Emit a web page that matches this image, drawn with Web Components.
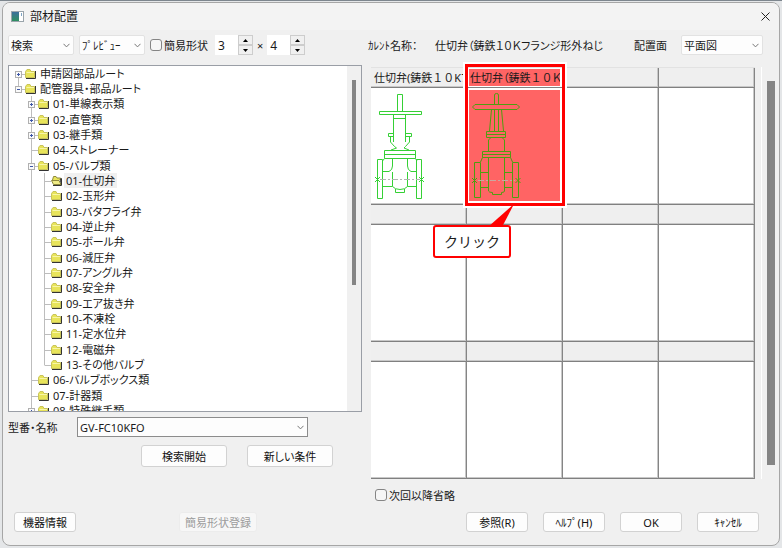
<!DOCTYPE html>
<html lang="ja">
<head>
<meta charset="utf-8">
<title>部材配置</title>
<style>
  html, body { height: 100%; margin: 0; }
  body {
    box-sizing: border-box;
    padding: 1px 2px 2px;
    background: #e4e6e8;
    border-top: 1px solid #7d868e;
    font: 11px/15px "Noto Sans", "Noto Sans CJK JP", sans-serif;
    font-feature-settings: "palt";
    color: #1a1a1a;
    overflow: hidden;
  }
</style>
</head>
<body>
<app-window caption="部材配置">
  <div slot="left-tools" class="tools">
    <drop-down label="表示モード" value="検索"></drop-down>
    <drop-down label="表示形式" value="ﾌﾟﾚﾋﾞｭｰ"></drop-down>
    <check-field label="簡易形状"></check-field>
  </div>
  <num-spinner slot="left-spin" label="行数" value="3"></num-spinner>
  <num-spinner slot="left-spin2" label="列数" value="4"></num-spinner>
  <part-tree slot="tree"></part-tree>
  <drop-down slot="model" label="型番・名称" value="GV-FC10KFO" boxed></drop-down>
  <push-button slot="search">検索開始</push-button>
  <push-button slot="search">新しい条件</push-button>
  <drop-down slot="plane" label="配置面" value="平面図"></drop-down>
  <part-gallery slot="gallery"></part-gallery>
  <check-field slot="skip" label="次回以降省略"></check-field>
  <push-button slot="info">機器情報</push-button>
  <push-button slot="register" disabled>簡易形状登録</push-button>
  <push-button slot="actions">参照(R)</push-button>
  <push-button slot="actions">ﾍﾙﾌﾟ(H)</push-button>
  <push-button slot="actions">OK</push-button>
  <push-button slot="actions">ｷｬﾝｾﾙ</push-button>
</app-window>

<script>
const make = (host, html) => {
  const t = document.createElement('template');
  t.innerHTML = html;
  host.attachShadow({ mode: 'open' }).append(t.content.cloneNode(true));
};

customElements.define('push-button', class extends HTMLElement {
  constructor() {
    super();
    make(this, `<style>
      :host { display: block; }
      button { display: block; box-sizing: border-box; width: 100%; height: 100%; padding: 0; margin: 0;
        font: inherit; font-feature-settings: inherit; color: #111; background: #fdfdfd;
        border: 1px solid #d2d2d2; border-radius: 3px; white-space: nowrap; }
      button:disabled { color: #9c9c9c; background: #f7f7f7; border-color: #ececec; }
    </style><button type="button"><slot></slot></button>`);
  }
  connectedCallback() {
    this.shadowRoot.querySelector('button').disabled = this.hasAttribute('disabled');
  }
});

customElements.define('drop-down', class extends HTMLElement {
  constructor() {
    super();
    const v = this.getAttribute('value'), l = this.getAttribute('label');
    make(this, `<style>
      :host { display: grid; height: 20px; align-items: stretch; }
      select { grid-area: 1 / 1; box-sizing: border-box; width: 100%; appearance: none; margin: 0;
        font: inherit; font-feature-settings: inherit; color: inherit; background: #fdfdfd;
        border: 1px solid #e2e2e2; border-radius: 2px; padding: 0 16px 0 2px; }
      :host([boxed]) select { border-color: #8c8c8c; border-radius: 0; }
      svg { grid-area: 1 / 1; justify-self: end; align-self: center; margin-right: 4px; pointer-events: none; }
    </style>
    <select aria-label="${l}"><option>${v}</option></select>
    <svg width="7" height="5" viewBox="0 0 7 5"><path d="M.5 .8 3.5 3.9 6.5 .8" fill="none" stroke="#777"/></svg>`);
  }
});

customElements.define('check-field', class extends HTMLElement {
  constructor() {
    super();
    make(this, `<style>
      :host { display: block; }
      label { display: flex; align-items: center; gap: 2px; white-space: nowrap; }
      input { appearance: none; box-sizing: border-box; width: 12px; height: 12px; margin: 0;
        border: 1px solid #858585; border-radius: 3px; background: #f6f6f6; }
    </style><label><input type="checkbox">${this.getAttribute('label')}</label>`);
  }
});

customElements.define('num-spinner', class extends HTMLElement {
  constructor() {
    super();
    make(this, `<style>
      :host { display: flex; height: 20px; }
      input { box-sizing: border-box; width: 23px; border: 0; margin: 0; padding: 0 0 0 3px; background: #fff;
        font: inherit; font-size: 12px; color: inherit; appearance: textfield; -moz-appearance: textfield; }
      input::-webkit-inner-spin-button { appearance: none; display: none; }
      .keys { display: grid; grid-template-rows: 1fr 1fr; width: 15px; }
      button { display: grid; place-items: center; padding: 0; margin: 0; background: #f0f0f0;
        border: 1px solid #cdcdcd; box-sizing: border-box; min-height: 0; }
      svg { display: block; }
    </style>
    <input type="number" aria-label="${this.getAttribute('label')}" value="${this.getAttribute('value')}">
    <div class="keys">
      <button type="button" aria-label="増やす"><svg width="5" height="3"><path d="M0 3 2.500 0 5 3z"/></svg></button>
      <button type="button" aria-label="減らす"><svg width="5" height="3"><path d="M0 0 2.500 3 5 0z"/></svg></button>
    </div>`);
  }
});

/* depth, expander ('+', '-', or ''), label */
const NODES = [
  [0, '+', '申請図部品ルート'], [0, '-', '配管器具・部品ルート'],
  [1, '+', '01-単線表示類'], [1, '+', '02-直管類'], [1, '+', '03-継手類'],
  [1, '', '04-ストレーナー'], [1, '-', '05-バルブ類'],
  [2, '', '01-仕切弁'], [2, '', '02-玉形弁'], [2, '', '03-バタフライ弁'], [2, '', '04-逆止弁'],
  [2, '', '05-ボール弁'], [2, '', '06-減圧弁'], [2, '', '07-アングル弁'], [2, '', '08-安全弁'],
  [2, '', '09-エア抜き弁'], [2, '', '10-不凍栓'], [2, '', '11-定水位弁'], [2, '', '12-電磁弁'],
  [2, '', '13-その他バルブ'],
  [1, '', '06-バルブボックス類'], [1, '', '07-計器類'], [1, '+', '08-特殊継手類']
];
const SELECTED = 7;

customElements.define('part-tree', class extends HTMLElement {
  constructor() {
    super();
    const line = d => `<path d="${d}" fill="none" stroke="#bdbdbd"/>`;
    const cell = s => `<svg width="13" height="16" viewBox="0 0 13 16">${s}</svg>`;
    const folder = '<path d="M.5 5.500 2 3.500H5L6 5.500H9.500V11.500H.5z" fill="#e8e45a" stroke="#c9c45a"/><path d="M1 12.500H10.500V5" fill="none" stroke="#333"/><path d="M1.500 6.500H9" stroke="#f8f6a8"/>';
    const open = '<path d="M1.500 7 2.500 3.500H5L6 5H9.500V7" fill="#e8e45a" stroke="#8d883c"/><path d="M.5 7.500H8L10 11.500H2.500z" fill="#efeb86" stroke="#8d883c"/><path d="M2 12.500H10.500V5.500L9 6.500 10.500 11" fill="none" stroke="#333"/>';
    const rows = NODES.map(([d, e, text], i) => {
      let s = '';
      for (let k = 0; k < d; k++) s += cell(k === 1 ? line('M6.500 0V16') : '');
      const first = i === 0, last = i === 1 || i === 19;
      s += cell(line(`M6.500 ${first ? 8 : 0}V${last ? 8 : 16}M6.500 8.500H13`) +
        (e ? `<rect x="3.500" y="5.500" width="6" height="6" fill="#fafafa" stroke="#b0b0b0"/>
              <path d="M5 8.500H8${e === '+' ? 'M6.500 7V10' : ''}" stroke="#3c56a8"/>` : ''));
      s += cell(i === SELECTED ? open : folder);
      return `<li role="treeitem" aria-level="${d + 1}"${i === SELECTED ? ' aria-selected="true"' : ''}>${s}<span>${text}</span></li>`;
    }).join('');
    make(this, `<style>
      :host { display: flex; overflow: hidden; min-height: 0; background: #fff; border: 1px solid #9a9ea6; }
      ul { flex: 1; min-width: 0; list-style: none; margin: 0; padding: 0 0 0 3px; }
      li { display: flex; height: 15px; white-space: nowrap; overflow: visible; }
      li:nth-child(3n) { height: 16px; }
      li svg { flex: none; display: block; }
      span { padding: 0 2px; line-height: 16px; }
      [aria-selected] span { background: #f0f0f0; }
      .bar { width: 14px; background: #f0f0f0; padding-top: 14px; box-sizing: border-box; }
      .thumb { width: 4px; height: 62%; margin: 0 auto; background: #858585; }
    </style><ul role="tree">${rows}</ul><div class="bar"><div class="thumb"></div></div>`);
  }
});

const VALVE_A = `<svg viewBox="371 89 92 114" width="92" height="114" fill="none" stroke="#35d035">
  <path d="M397.500 112V95.500H402.500V112M379.500 112.500H421.500V115.500H379.500zM393.500 115.500V143M405.500 115.500V143M393.500 119.500H405.500
    M388.500 134.500H393.500M388.500 134.500V137.500H393.500M405.500 134.500H411.500V137.500H405.500M390.500 137.500V143L394.500 147.500 396.500 149 391 151M409.500 137.500V143L405.500 147.500 404 149 409 151
    M384.500 151.500H415.500V159.500H384.500zM384.500 155.500H415.500M384.500 159.500 382.500 162M415.500 159.500 417 162
    M377.500 160.500H382.500V199.500H377.500zM416.500 160.500H421.500V199.500H416.500z
    M382.500 172.500H389Q392.500 171 392.500 167V159.500M416.500 172.500H411Q407.500 171 407.500 167V159.500
    M382.500 187.500H392.500V173M416.500 187.500H407.500V173M392.500 187.500Q395 190.500 400 190.500T407.500 187.500M395.500 190V193.500H404.500V190"/>
  <path d="M375 178 380 183M380 178 375 183M419 178 424 183M424 178 419 183"/>
  <path d="M380 180.500H420" stroke="#b0b6b0" stroke-dasharray="6 2 2 2"/></svg>`;
const VALVE_B = `<svg viewBox="469 91 92 110" width="92" height="110" fill="none" stroke="#4f9e10">
  <path d="M494.500 106V96Q494.500 94.500 496.500 94.500T498.500 96V106M475 105.500H517L519.500 108 517 110.500H475L472.500 108z
    M491.500 110.500 489.500 132M501.500 110.500 503.500 132M494.500 110.500V132M498.500 110.500V132
    M486.500 132.500H505.500V138.500H486.500zM486.500 135.500H505.500M491 138.500 488.500 141V152M502 138.500 504.500 141V152
    M482.500 152.500H510.500V158.500H482.500zM482.500 155.500H510.500M482.500 158.500 480.500 163M510.500 158.500 512.500 163
    M474.500 163.500H480.500V198.500H474.500zM512.500 163.500H518.500V198.500H512.500z
    M488.500 158.500V192Q489 193.500 492.500 193.500V195.500H501.500V193.500Q504.500 193.500 504.500 192V158.500
    M480.500 173.500H488.500M480.500 188.500H488.500M504.500 173.500H512.500M504.500 188.500H512.500"/>
  <path d="M472 179 477 184M477 179 472 184M515.500 179 520.500 184M520.500 179 515.500 184"/>
  <path d="M478 181.500H515" stroke="#c9a8a0" stroke-dasharray="6 2 2 2"/></svg>`;

customElements.define('part-gallery', class extends HTMLElement {
  constructor() {
    super();
    const parts = [['仕切弁(鋳鉄<b>１０</b>Kフ', VALVE_A], ['仕切弁（鋳鉄<b>１０</b>Ｋ', VALVE_B]];
    let cells = '';
    for (let i = 0; i < 12; i++) {
      const [name, pic] = parts[i] || ['', ''];
      cells += `<div class="cell${i === 1 ? ' on' : ''}"><div class="head"><div class="in">${name}</div></div>
        <div class="body"><div class="in">${pic}</div></div>${i === 1 ? `<div class="mark"></div>
        <div class="note">クリック</div>
        <svg class="tail" width="28" height="25" viewBox="0 0 28 25"><path d="M1 24 27 1 15 24z" fill="#f00"/></svg>` : ''}</div>`;
    }
    make(this, `<style>
      :host { display: flex; min-height: 0; }
      .grid { flex: 1; min-width: 0; display: grid; grid-template-columns: repeat(4, minmax(0, 1fr)); grid-template-rows: repeat(3, minmax(0, 1fr));
        border-top: 1px solid #e2e2e2; box-sizing: border-box; }
      .cell { position: relative; display: grid; grid-template-rows: 20px minmax(0, 1fr); grid-template-columns: minmax(0, 1fr);
        border-right: 1px solid #858585; box-shadow: inset -1px 0 #c8c8c8; }
      .head, .body { border-bottom: 1px solid #808080; box-shadow: inset 0 -1px #c8c8c8, inset -1px 0 #c8c8c8; min-height: 0; }
      .head { background: #efefef; }
      .body { background: #fff; }
      .in { overflow: hidden; white-space: nowrap; }
      .head .in { margin: 1px 3px 0 0; padding-left: 3px; line-height: 17px; height: 17px; }
      b { font-weight: inherit; font-feature-settings: normal; }
      .body svg { display: block; }
      .on { z-index: 2; }
      .on .head, .on .body { background: #fff; box-shadow: none; }
      .on .in { background: #ff6464; }
      .on .head .in { margin: 1px 2px 0; padding-left: 1px; }
      .on .body { display: grid; }
      .on .body .in { margin: 2px 2px 3px; }
      .mark { position: absolute; inset: -4px -3px -1px -2px; border: 3px solid #f00; outline: 2px solid #fff; }
      .note { position: absolute; left: -34px; top: 157px; box-sizing: border-box; width: 78px; height: 33px;
        border: 2px solid #f00; border-radius: 3px; background: #fff; text-align: center;
        font: 14px/28px "Noto Sans CJK JP", sans-serif; font-feature-settings: normal; white-space: nowrap; }
      .tail { position: absolute; left: 20px; top: 135px; }
      .bar { width: 15px; margin-left: 6px; border-left: 1px solid #fff; box-sizing: border-box; padding: 14px 0 14px 5px; }
      .thumb { height: 100%; background: #858585; width: 8px; }
    </style><div class="grid">${cells}</div><div class="bar"><div class="thumb"></div></div>`);
  }
});

customElements.define('app-window', class extends HTMLElement {
  constructor() {
    super();
    make(this, `<style>
      :host { display: flex; flex-direction: column; box-sizing: border-box; height: 100%; background: #f0f0f0;
        border: 1px solid #a6a6a6; border-radius: 8px; overflow: hidden; }
      header { display: flex; align-items: center; height: 27px; flex: none; background: #f3f3f3; padding: 0 9px 0 8px; gap: 6px; font-size: 12px; }
      header .name { flex: 1; }
      header button { border: 0; background: none; padding: 0; margin: 0; display: block; }
      svg { display: block; }
      main { flex: 1; min-height: 0; display: grid; grid-template-columns: minmax(0, 354fr) minmax(0, 408fr); column-gap: 6px; padding: 0 3px 0 5px; }
      .left, .right { display: flex; flex-direction: column; min-height: 0; min-width: 0; }
      .row { display: flex; align-items: center; flex: none; white-space: nowrap; }
      .tools { height: 35px; box-sizing: border-box; padding-bottom: 5px; }
      ::slotted(.tools) { display: grid; grid-template-columns: 66px 66px auto; align-items: center; column-gap: 5px; }
      .spins { margin-left: 7px; gap: 4px; }
      ::slotted(part-tree) { flex: 1; }
      .model { height: 30px; }
      .model label { flex: 0 0 69px; }
      .model ::slotted(drop-down) { flex: 0 1 231px; }
      .search { height: 22px; margin: 3px 0 0 133px; gap: 20px; }
      .search ::slotted(push-button) { width: 86px; height: 22px; }
      .left { padding-bottom: 39px; }
      .right .tools { padding: 0 13px 5px 0; }
      .cur { flex: 0 0 67px; }
      .plane { margin-left: auto; gap: 14px; }
      .plane ::slotted(drop-down) { width: 82px; }
      ::slotted(part-gallery) { flex: 1; margin: 2px 0 0 3px; }
      .skip { height: 22px; padding: 5px 0 0 7px; }
      footer { flex: none; display: flex; align-items: center; padding: 6px 20px 13px 11px; }
      footer ::slotted(push-button) { height: 20px; width: 62px; }
      footer .reg { margin-left: 103px; }
      .reg ::slotted(push-button) { width: 78px; }
      .acts { display: flex; gap: 15px; margin-left: auto; }
    </style>
    <header>
      <svg width="13" height="11" viewBox="0 0 13 11"><defs><linearGradient id="g" x2="0" y2="1"><stop stop-color="#3c6f9c"/><stop offset="1" stop-color="#2f8f60"/></linearGradient></defs><rect x=".5" y=".5" width="12" height="10" fill="#fff" stroke="#9aa4ab"/><rect x="1" y="1" width="7" height="9" fill="url(#g)"/><path d="M10.500 2V5" stroke="#7fa4c4"/></svg>
      <span class="name">${this.getAttribute('caption')}</span>
      <button type="button" aria-label="閉じる"><svg width="9" height="9"><path d="M.5 .5 8.500 8.500M8.500 .5 .5 8.500" stroke="#222"/></svg></button>
    </header>
    <main>
      <section class="left">
        <div class="row tools"><slot name="left-tools"></slot><div class="row spins"><slot name="left-spin"></slot><span>×</span><slot name="left-spin2"></slot></div></div>
        <slot name="tree"></slot>
        <div class="row model"><label>型番・名称</label><slot name="model"></slot></div>
        <div class="row search"><slot name="search"></slot></div>
      </section>
      <section class="right">
        <div class="row tools"><span class="cur">ｶﾚﾝﾄ名称：</span><span>仕切弁（鋳鉄１０Ｋフランジ形外ねじ</span>
          <div class="row plane"><span>配置面</span><slot name="plane"></slot></div></div>
        <slot name="gallery"></slot>
        <div class="row skip"><slot name="skip"></slot></div>
      </section>
    </main>
    <footer><slot name="info"></slot><div class="reg"><slot name="register"></slot></div><div class="acts"><slot name="actions"></slot></div></footer>`);
  }
});
</script>
</body>
</html>
